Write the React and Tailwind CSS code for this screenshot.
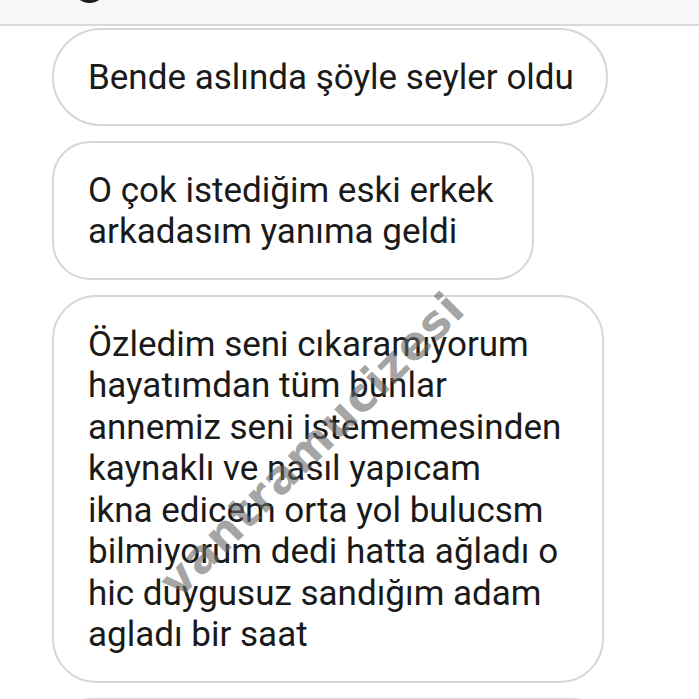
import React from 'react';

const messages = [
    { id: 1, width: 'w-[556px]', lines: ['Bende aslında şöyle seyler oldu'], round: 'rounded-[49px]' },
    { id: 2, width: 'w-[482px]', lines: ['O çok istediğim eski erkek', 'arkadasım yanıma geldi'], round: 'rounded-[38px]' },
    {
        id: 3,
        width: 'w-[552px]',
        round: 'rounded-[44px]',
        lines: [
            'Özledim seni cıkaramıyorum',
            'hayatımdan tüm bunlar',
            'annemiz seni istememesinden',
            'kaynaklı ve nasıl yapıcam',
            'ikna edicem orta yol bulucsm',
            'bilmiyorum dedi hatta ağladı o',
            'hic duygusuz sandığım adam',
            'agladı bir saat',
        ],
    },
];

export default function App() {
    return (
        <div className="relative w-[699px] h-[699px] overflow-hidden bg-white" style={{ fontFamily: 'Roboto, "Noto Sans", sans-serif' }}>
            {/* Header strip */}
            <div className="flex h-[26px] overflow-hidden bg-[#f7f7f7] border-b-2 border-[#d9d9d9] pl-[73px]">
                <div className="w-[33px] h-[33px] -mt-[30px] shrink-0 rounded-full bg-[#1f1f1f]"></div>
            </div>

            {/* Bubbles */}
            <div className="flex flex-col gap-[15px] pl-[52px] pt-[2px]">
                {messages.map(m => (
                    <div
                        key={m.id}
                        className={`${m.width} ${m.round} border-2 border-[#d6d6d6] bg-white pl-[34px] pt-[27px] pb-[25px] text-[35px] leading-[41.5px] text-[#1a1a1a]`}
                    >
                        {m.lines.map((l, i) => (
                            <div key={i} className="whitespace-nowrap">{l}</div>
                        ))}
                    </div>
                ))}
                <div className="w-[560px] h-[80px] rounded-[44px] border-2 border-[#d6d6d6] bg-white"></div>
            </div>

            {/* Watermark */}
            <div className="absolute left-[312px] top-[445px] -translate-x-1/2 -translate-y-1/2 -rotate-[45deg] whitespace-nowrap text-[46px] font-bold tracking-[1px] text-[rgba(105,105,105,0.6)]" style={{ fontFamily: '"DejaVu Sans", sans-serif' }}>
                vantramucizesi
            </div>
        </div>
    );
}
